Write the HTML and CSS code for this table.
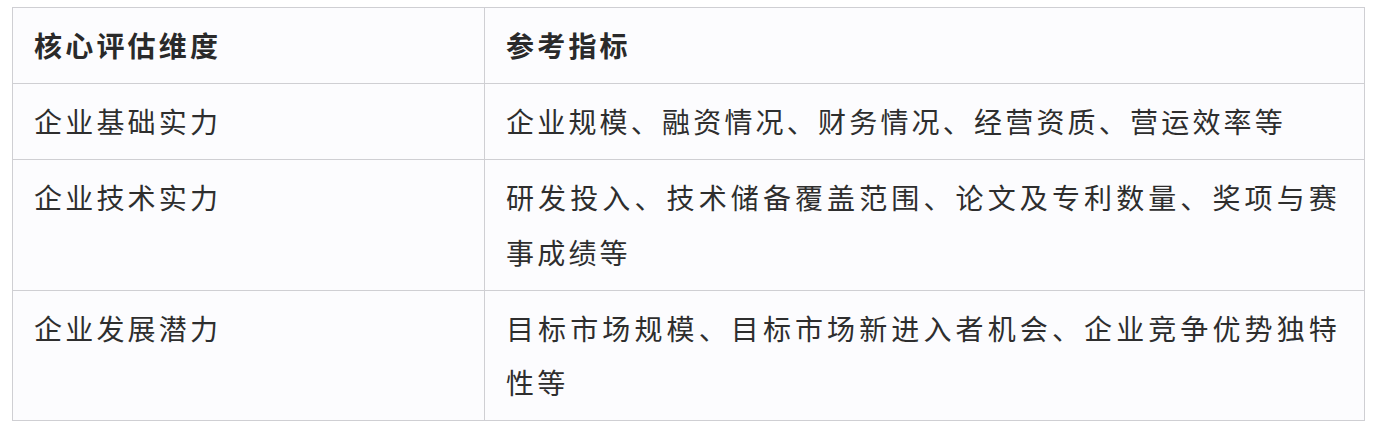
FILE: index.html
```html
<!DOCTYPE html>
<html lang="zh-CN">
<head>
<meta charset="utf-8">
<title>核心评估维度</title>
<link rel="stylesheet" href="styles.css">
</head>
<body>
<table class="eval-table">
  <colgroup>
    <col class="col-dim">
    <col class="col-ind">
  </colgroup>
  <thead>
    <tr>
      <th>核心评估维度</th>
      <th>参考指标</th>
    </tr>
  </thead>
  <tbody>
    <tr>
      <td>企业基础实力</td>
      <td>企业规模、融资情况、财务情况、经营资质、营运效率等</td>
    </tr>
    <tr>
      <td>企业技术实力</td>
      <td>研发投入、技术储备覆盖范围、论文及专利数量、奖项与赛事成绩等</td>
    </tr>
    <tr>
      <td>企业发展潜力</td>
      <td>目标市场规模、目标市场新进入者机会、企业竞争优势独特性等</td>
    </tr>
  </tbody>
</table>
</body>
</html>
```

FILE: styles.css
```css
html, body {
  margin: 0;
  background: #ffffff;
}

body {
  padding: 7px 0 0 12px;
  font-family: "Noto Sans CJK SC", "Noto Sans", sans-serif;
  color: #2e2e2e;
}

.eval-table {
  width: 1353px;
  border-collapse: collapse;
  table-layout: fixed;
  background: #fcfcfe;
}

.col-dim {
  width: 472px;
}

.eval-table th,
.eval-table td {
  border: 1px solid #cfcfd3;
  padding: 10.25px 24px 10.25px 21px;
  font-size: 28px;
  line-height: 54.5px;
  letter-spacing: 3.2px;
  text-align: justify;
  vertical-align: top;
}

.eval-table th {
  font-weight: 700;
  color: #2a2a2a;
}
```
